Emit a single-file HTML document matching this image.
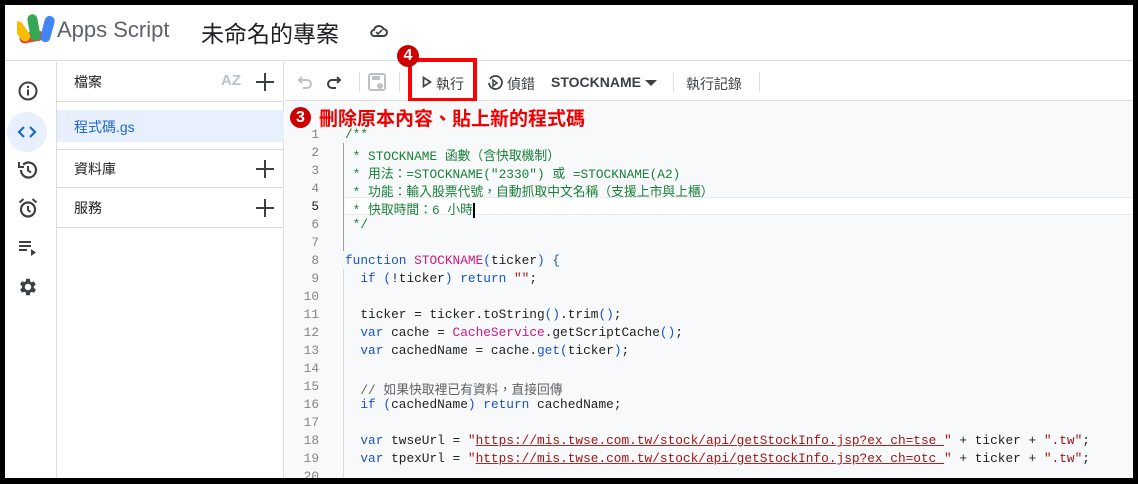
<!DOCTYPE html>
<html><head><meta charset="utf-8"><style>
*{margin:0;padding:0;box-sizing:border-box}
body{width:1138px;height:484px;background:#000;position:relative;overflow:hidden;font-family:"Liberation Sans","Noto Sans CJK TC",sans-serif;color:#3c4043}
#app{position:absolute;left:5px;top:5px;width:1128px;height:473px;background:#fff;overflow:hidden}
.hdr{position:absolute;left:0;top:0;width:100%;height:56px;border-bottom:1px solid #dadce0}
.rail{position:absolute;left:0;top:57px;width:52px;bottom:0;border-right:1px solid #dadce0}
.files{position:absolute;left:52px;top:57px;width:227px;bottom:0;border-right:1px solid #dadce0}
.tb{position:absolute;left:280px;top:57px;right:0;height:39px;border-bottom:1px solid #dadce0}
.code{position:absolute;left:280px;top:96px;right:0;bottom:0;background:#f8f9fa}
.ln{position:absolute;left:0;width:34px;text-align:right;font:12.8px "Liberation Mono",monospace;color:#80868b}
.cl{position:absolute;left:60px;white-space:pre;font:12.8px "Liberation Mono","Noto Sans CJK TC",monospace;color:#202124}
.cm{color:#188038}.kw{color:#1a53c7}.fn{color:#d01884}.st{color:#a31515}.u{color:#a31515;text-decoration:underline;text-decoration-color:#c5221f}
.sec{position:absolute;left:0;width:227px;border-bottom:1px solid #dadce0;font-size:14px;color:#202124}
.plus{position:absolute;right:10px}
.ic{position:absolute;left:12px}
.tbt{position:absolute;top:12px;font-size:14px;color:#3c4043}
.sep{position:absolute;top:10px;width:1px;height:20px;background:#dadce0}
.badge{position:absolute;width:22px;height:22px;border-radius:50%;background:#c00;color:#fff;font-weight:bold;font-size:16px;text-align:center;line-height:22px}
</style></head><body><div id="app">
<div class="hdr">
<svg style="position:absolute;left:12px;top:9px" width="38" height="36" viewBox="0 0 34 32"><rect x="2" y="16" width="22" height="9" rx="4.5" fill="#ea4335" transform="rotate(-10 13 20)"/><rect x="3" y="4" width="9" height="20" rx="4.5" fill="#fbbc04" transform="rotate(-35 8 20)"/><rect x="12" y="0" width="9" height="24" rx="4.5" fill="#34a853" transform="rotate(-10 16 20)"/><rect x="21" y="1" width="9" height="24" rx="4.5" fill="#4285f4" transform="rotate(15 25 20)"/></svg>
<div style="position:absolute;left:52px;top:12px;font-size:22px;color:#5f6368">Apps Script</div>
<div style="position:absolute;left:196px;top:10px;font-size:23px;color:#202124">未命名的專案</div>
<svg style="position:absolute;left:365px;top:19px" width="18" height="14" viewBox="0 0 18 14"><path d="M4.5 12h9a3.5 3.5 0 0 0 0-7 5 5 0 0 0-9.5 1A3 3 0 0 0 4.5 12z" fill="none" stroke="#3c4043" stroke-width="2"/><path d="M6 8l2 2 4-4" fill="none" stroke="#3c4043" stroke-width="1.6"/></svg>
</div>
<div class="rail">
<svg class="ic" style="top:18px" width="22" height="22" viewBox="0 0 22 22"><circle cx="11" cy="11" r="8.5" fill="none" stroke="#3c4043" stroke-width="2"/><rect x="10" y="9.5" width="2" height="6" fill="#3c4043"/><circle cx="11" cy="7" r="1.2" fill="#3c4043"/></svg>
<div style="position:absolute;left:2px;top:50px;width:40px;height:40px;border-radius:50%;background:#e8f0fe"></div>
<svg class="ic" style="top:60px;left:12px" width="20" height="20" viewBox="0 0 20 20"><path d="M7 5L2 10l5 5M13 5l5 5-5 5" fill="none" stroke="#1967d2" stroke-width="2.2"/></svg>
<svg class="ic" style="top:97px" width="22" height="22" viewBox="0 0 22 22"><path d="M4 11a7.5 7.5 0 1 0 2.2-5.3" fill="none" stroke="#3c4043" stroke-width="2.2"/><path d="M2 3v5h5" fill="none" stroke="#3c4043" stroke-width="2"/><path d="M11 7v4.5l3 2" fill="none" stroke="#3c4043" stroke-width="2"/></svg>
<svg class="ic" style="top:135px" width="22" height="22" viewBox="0 0 22 22"><circle cx="11" cy="12.5" r="7" fill="none" stroke="#3c4043" stroke-width="2.2"/><path d="M11 9v4l2.5 2M2.5 5.5l4-3.5M19.5 5.5l-4-3.5" fill="none" stroke="#3c4043" stroke-width="2"/></svg>
<svg class="ic" style="top:175px" width="22" height="22" viewBox="0 0 22 22"><path d="M2 5h12M2 9h12M2 13h8" stroke="#3c4043" stroke-width="2"/><path d="M14 12l5 3.5-5 3.5z" fill="#3c4043"/></svg>
<svg class="ic" style="top:214px" width="22" height="22" viewBox="0 0 24 24"><path fill="#3c4043" d="M19.4 13a7.8 7.8 0 0 0 0-2l2.1-1.6-2-3.5-2.5 1a7 7 0 0 0-1.7-1L15 3h-4l-.4 2.7a7 7 0 0 0-1.7 1l-2.5-1-2 3.5L6.5 11a7.8 7.8 0 0 0 0 2l-2.1 1.6 2 3.5 2.5-1a7 7 0 0 0 1.7 1L11 21h4l.4-2.7a7 7 0 0 0 1.7-1l2.5 1 2-3.5zM13 15.5a3.5 3.5 0 1 1 0-7 3.5 3.5 0 0 1 0 7z" transform="translate(-1 0)"/></svg>
</div>
<div class="files">
<div class="sec" style="top:0;height:40px"><span style="position:absolute;left:17px;top:10px">檔案</span><span style="position:absolute;left:164px;top:10px;font-size:15px;font-weight:bold;color:#bdc1c6">AZ</span><svg class="plus" style="top:11px" width="18" height="18"><path d="M9 0v18M0 9h18" stroke="#3c4043" stroke-width="2"/></svg></div>
<div style="position:absolute;left:0;top:48px;width:227px;height:32px;background:#e8f0fe;color:#1967d2;font-size:14px;padding:7px 17px">程式碼.gs</div>
<div class="sec" style="top:88px;height:39px;border-top:1px solid #dadce0;top:87px"><span style="position:absolute;left:17px;top:9px">資料庫</span><svg class="plus" style="top:10px" width="18" height="18"><path d="M9 0v18M0 9h18" stroke="#3c4043" stroke-width="2"/></svg></div>
<div class="sec" style="top:127px;height:39px"><span style="position:absolute;left:17px;top:9px">服務</span><svg class="plus" style="top:10px" width="18" height="18"><path d="M9 0v18M0 9h18" stroke="#3c4043" stroke-width="2"/></svg></div>
</div>
<div class="tb">
<svg style="position:absolute;left:13px;top:13px" width="16" height="14" viewBox="0 0 16 14"><path d="M4 2L1 5l3 3M1 5h8a4 4 0 0 1 0 8H5" fill="none" stroke="#bdc1c6" stroke-width="2"/></svg>
<svg style="position:absolute;left:40px;top:13px" width="16" height="14" viewBox="0 0 16 14"><path d="M12 2l3 3-3 3M15 5H7a4 4 0 0 0 0 8h4" fill="none" stroke="#3c4043" stroke-width="2"/></svg>
<div class="sep" style="left:74px"></div>
<svg style="position:absolute;left:82px;top:10px" width="20" height="20" viewBox="0 0 20 20"><rect x="2" y="2" width="16" height="16" rx="2" fill="none" stroke="#bdc1c6" stroke-width="2"/><rect x="5" y="4" width="8" height="4" fill="#bdc1c6"/><circle cx="13" cy="14" r="3" fill="#bdc1c6"/></svg>
<div class="sep" style="left:114px"></div>
<svg style="position:absolute;left:137px;top:14px" width="10" height="12" viewBox="0 0 10 12"><path d="M1.5 1.5v9l7-4.5z" fill="none" stroke="#3c4043" stroke-width="1.7"/></svg>
<div class="tbt" style="left:151px">執行</div>
<svg style="position:absolute;left:202px;top:13px" width="16" height="16" viewBox="0 0 16 16"><path d="M3 4a6.5 6.5 0 1 1-1 4" fill="none" stroke="#3c4043" stroke-width="1.7"/><path d="M6 5v6l4-3z" fill="none" stroke="#3c4043" stroke-width="1.5"/></svg>
<div class="tbt" style="left:222px">偵錯</div>
<div class="tbt" style="left:266px;font-weight:bold;color:#3c4043;font-size:14px">STOCKNAME</div>
<svg style="position:absolute;left:360px;top:18px" width="12" height="7"><path d="M0 0h12L6 6z" fill="#3c4043"/></svg>
<div class="sep" style="left:388px"></div>
<div class="tbt" style="left:401px">執行記錄</div>
<div class="sep" style="left:474px"></div>
</div>
<div style="position:absolute;left:403px;top:53px;width:69px;height:44px;border:4px solid #f00"></div>
<div class="badge" style="left:392px;top:40px">4</div>
<div class="code">
<div class="badge" style="left:5px;top:6px;width:21px;height:21px;line-height:21px">3</div>
<div style="position:absolute;left:34px;top:3px;font-size:19px;font-weight:bold;color:#e00;font-family:'Noto Sans CJK TC',sans-serif">刪除原本內容、貼上新的程式碼</div>
<div style="position:absolute;left:58px;top:42px;width:1px;height:108px;background:#9aa0a6"></div>
<div style="position:absolute;left:58px;top:168px;width:1px;height:220px;background:#dadce0"></div>
<div style="position:absolute;left:60px;top:96px;right:0;height:18px;border-top:1px solid #e8eaed;border-bottom:1px solid #e8eaed;background:#fff"></div>
<div id="lines"></div>
</div>
</div>
<script>
var L=[
'<span class="cm">/**</span>',
'<span class="cm"> * STOCKNAME 函數（含快取機制）</span>',
'<span class="cm"> * 用法：=STOCKNAME("2330") 或 =STOCKNAME(A2)</span>',
'<span class="cm"> * 功能：輸入股票代號，自動抓取中文名稱（支援上市與上櫃）</span>',
'<span class="cm"> * 快取時間：6 小時</span><span style="border-left:2px solid #000"></span>',
'<span class="cm"> */</span>',
'',
'<span class="kw">function</span> <span class="fn">STOCKNAME</span><span class="kw">(</span>ticker<span class="kw">)</span> <span class="kw">{</span>',
'  <span class="kw">if</span> <span class="kw">(</span>!ticker<span class="kw">)</span> <span class="kw">return</span> <span class="st">""</span>;',
'',
'  ticker = ticker.toString<span class="kw">()</span>.trim<span class="kw">()</span>;',
'  <span class="kw">var</span> cache = <span class="fn">CacheService</span>.getScriptCache<span class="kw">()</span>;',
'  <span class="kw">var</span> cachedName = cache.<span class="kw">get</span><span class="kw">(</span>ticker<span class="kw">)</span>;',
'',
'  <span style="color:#5f6368">// 如果快取裡已有資料，直接回傳</span>',
'  <span class="kw">if</span> <span class="kw">(</span>cachedName<span class="kw">)</span> <span class="kw">return</span> cachedName;',
'',
'  <span class="kw">var</span> twseUrl = <span class="st">"</span><span class="u">https://mis.twse.com.tw/stock/api/getStockInfo.jsp?ex_ch=tse_</span><span class="st">"</span> + ticker + <span class="st">".tw"</span>;',
'  <span class="kw">var</span> tpexUrl = <span class="st">"</span><span class="u">https://mis.twse.com.tw/stock/api/getStockInfo.jsp?ex_ch=otc_</span><span class="st">"</span> + ticker + <span class="st">".tw"</span>;',
''];
var h='';for(var i=0;i<L.length;i++){var t=26+i*18;h+='<div class="ln" style="top:'+t+'px;'+(i==4?'color:#202124':'')+'">'+(i+1)+'</div><div class="cl" style="top:'+t+'px">'+L[i]+'</div>';}
document.getElementById('lines').innerHTML=h;
</script>
</body></html>
